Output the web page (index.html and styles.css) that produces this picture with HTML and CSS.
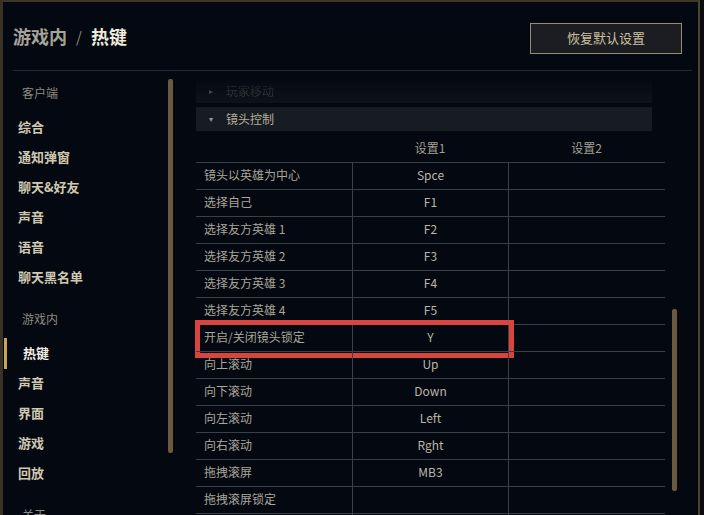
FILE: index.html
```html
<!DOCTYPE html>
<html lang="zh-CN">
<head>
    <meta charset="UTF-8">
    <meta name="viewport" content="width=device-width, initial-scale=1.0">
    <title>游戏内 / 热键</title>
    <link rel="stylesheet" href="styles.css">
</head>
<body>
    <div class="frame">
        <header class="top">
            <h1 class="crumbs">
                <span class="crumb">游戏内</span>
                <span class="sep">/</span>
                <span class="crumb current">热键</span>
            </h1>
            <button class="reset">恢复默认设置</button>
        </header>

        <div class="body">
            <aside class="side">
                <nav class="nav">
                    <div class="group">
                        <div class="group-label">客户端</div>
                        <a class="nav-item">综合</a>
                        <a class="nav-item">通知弹窗</a>
                        <a class="nav-item">聊天&amp;好友</a>
                        <a class="nav-item">声音</a>
                        <a class="nav-item">语音</a>
                        <a class="nav-item">聊天黑名单</a>
                    </div>
                    <div class="group">
                        <div class="group-label">游戏内</div>
                        <a class="nav-item active">热键</a>
                        <a class="nav-item">声音</a>
                        <a class="nav-item">界面</a>
                        <a class="nav-item">游戏</a>
                        <a class="nav-item">回放</a>
                    </div>
                    <div class="group">
                        <div class="group-label">关于</div>
                    </div>
                </nav>
                <div class="thumb side-thumb"></div>
            </aside>

            <main class="content">
                <div class="list">
                    <div class="section faded"><span class="caret">▸</span>玩家移动</div>
                    <div class="section"><span class="caret">▾</span>镜头控制</div>

                    <div class="keys">
                        <div class="keys-head">
                            <span></span>
                            <span>设置1</span>
                            <span>设置2</span>
                        </div>
                        <div class="key-row"><span>镜头以英雄为中心</span><span>Spce</span><span></span></div>
                        <div class="key-row"><span>选择自己</span><span>F1</span><span></span></div>
                        <div class="key-row"><span>选择友方英雄 1</span><span>F2</span><span></span></div>
                        <div class="key-row"><span>选择友方英雄 2</span><span>F3</span><span></span></div>
                        <div class="key-row"><span>选择友方英雄 3</span><span>F4</span><span></span></div>
                        <div class="key-row"><span>选择友方英雄 4</span><span>F5</span><span></span></div>
                        <div class="key-row marked"><span>开启/关闭镜头锁定</span><span>Y</span><span></span></div>
                        <div class="key-row"><span>向上滚动</span><span>Up</span><span></span></div>
                        <div class="key-row"><span>向下滚动</span><span>Down</span><span></span></div>
                        <div class="key-row"><span>向左滚动</span><span>Left</span><span></span></div>
                        <div class="key-row"><span>向右滚动</span><span>Rght</span><span></span></div>
                        <div class="key-row"><span>拖拽滚屏</span><span>MB3</span><span></span></div>
                        <div class="key-row"><span>拖拽滚屏锁定</span><span></span><span></span></div>
                        <div class="key-row"><span></span><span></span><span></span></div>
                    </div>
                </div>
                <div class="thumb main-thumb"></div>
            </main>
        </div>
    </div>
</body>
</html>
```

FILE: styles.css
```css
html, body {
    margin: 0;
    padding: 0;
    background-color: #0b0c0e;
}
body {
    font-family: "Noto Sans CJK SC", "Noto Sans", sans-serif;
    width: 704px;
    height: 515px;
    overflow: hidden;
}
.frame {
    width: 700px;
    height: 515px;
    box-sizing: border-box;
    background-color: #040811;
    border-top: 2px solid #3e3729;
    border-left: 3px solid #3a3325;
    border-right: 2px solid #4a4333;
    overflow: hidden;
    display: flex;
    flex-direction: column;
}
.top {
    height: 68px;
    margin: 0 6px 0 10px;
    padding-right: 10px;
    border-bottom: 1px solid #232834;
    display: flex;
    align-items: center;
    justify-content: space-between;
    flex-shrink: 0;
}
.crumbs {
    margin: 0;
    font-size: 18px;
    font-weight: bold;
    display: flex;
    align-items: center;
    gap: 9px;
}
.crumb {
    color: #a6a398;
}
.crumb.current {
    color: #f0ebdc;
}
.sep {
    color: #8d8a80;
    font-size: 15px;
    font-weight: normal;
}
.reset {
    margin-top: 5px;
    width: 152px;
    height: 31px;
    background-color: #1b1d23;
    border: 1px solid #938c76;
    color: #cbc09c;
    font-family: inherit;
    font-size: 13px;
    padding: 0 0 3px;
}
.body {
    flex: 1;
    display: flex;
    min-height: 0;
}
.side {
    display: flex;
    align-items: flex-start;
    flex-shrink: 0;
}
.nav {
    width: 165px;
    padding-top: 7px;
}
.group + .group {
    margin-top: 12px;
}
.group-label {
    height: 30px;
    line-height: 30px;
    padding-left: 19px;
    margin-bottom: 4px;
    font-size: 12px;
    color: #8e8b82;
}
.nav-item {
    display: block;
    position: relative;
    height: 30px;
    line-height: 30px;
    padding-left: 15px;
    font-size: 13px;
    font-weight: bold;
    color: #cfc8b0;
}
.nav-item.active {
    padding-left: 20px;
    color: #f3efe3;
}
.nav-item.active::before {
    content: "";
    position: absolute;
    left: 1px;
    top: 0;
    width: 3px;
    height: 31px;
    background-color: #c8a45e;
}
.thumb {
    width: 5px;
    border-radius: 2px;
    background-color: #6b5a3d;
    flex-shrink: 0;
}
.side-thumb {
    margin-top: 8px;
    height: 374px;
}
.content {
    display: flex;
    align-items: flex-start;
    padding-left: 23px;
}
.list {
    width: 469px;
    padding-top: 8px;
}
.section {
    width: 456px;
    height: 24px;
    margin-bottom: 4px;
    padding-bottom: 2px;
    box-sizing: border-box;
    display: flex;
    align-items: center;
    background-color: #171b22;
    color: #b3ad9c;
    font-size: 12px;
}
.section.faded {
    background-color: #12161d;
    color: #5b5a57;
    -webkit-mask-image: linear-gradient(to bottom, rgba(0,0,0,0.1), rgba(0,0,0,0.75));
    mask-image: linear-gradient(to bottom, rgba(0,0,0,0.1), rgba(0,0,0,0.75));
}
.caret {
    width: 30px;
    text-align: center;
    font-size: 8px;
    color: #9c988c;
}
.keys-head {
    display: grid;
    grid-template-columns: 156px 156px 157px;
    height: 27px;
    padding-bottom: 3px;
    box-sizing: border-box;
    align-items: center;
    font-size: 12px;
    color: #a39f93;
    text-align: center;
}
.key-row {
    position: relative;
    display: grid;
    grid-template-columns: 156px 156px 157px;
    height: 26px;
    border-top: 1px solid #3b3f48;
    font-size: 12px;
    color: #a9a699;
}
.key-row span {
    display: flex;
    align-items: center;
    justify-content: center;
    padding-bottom: 3px;
    border-left: 1px solid #3b3f48;
    color: #bab6aa;
}
.key-row span:first-child {
    justify-content: flex-start;
    padding-left: 8px;
    border-left: none;
    color: #a9a699;
}
.key-row.marked::after {
    content: "";
    position: absolute;
    left: -1px;
    top: -5px;
    width: 319px;
    height: 38px;
    box-sizing: border-box;
    border: 5px solid #d9443f;
}
.main-thumb {
    margin-left: 7px;
    margin-top: 238px;
    height: 182px;
}
```
